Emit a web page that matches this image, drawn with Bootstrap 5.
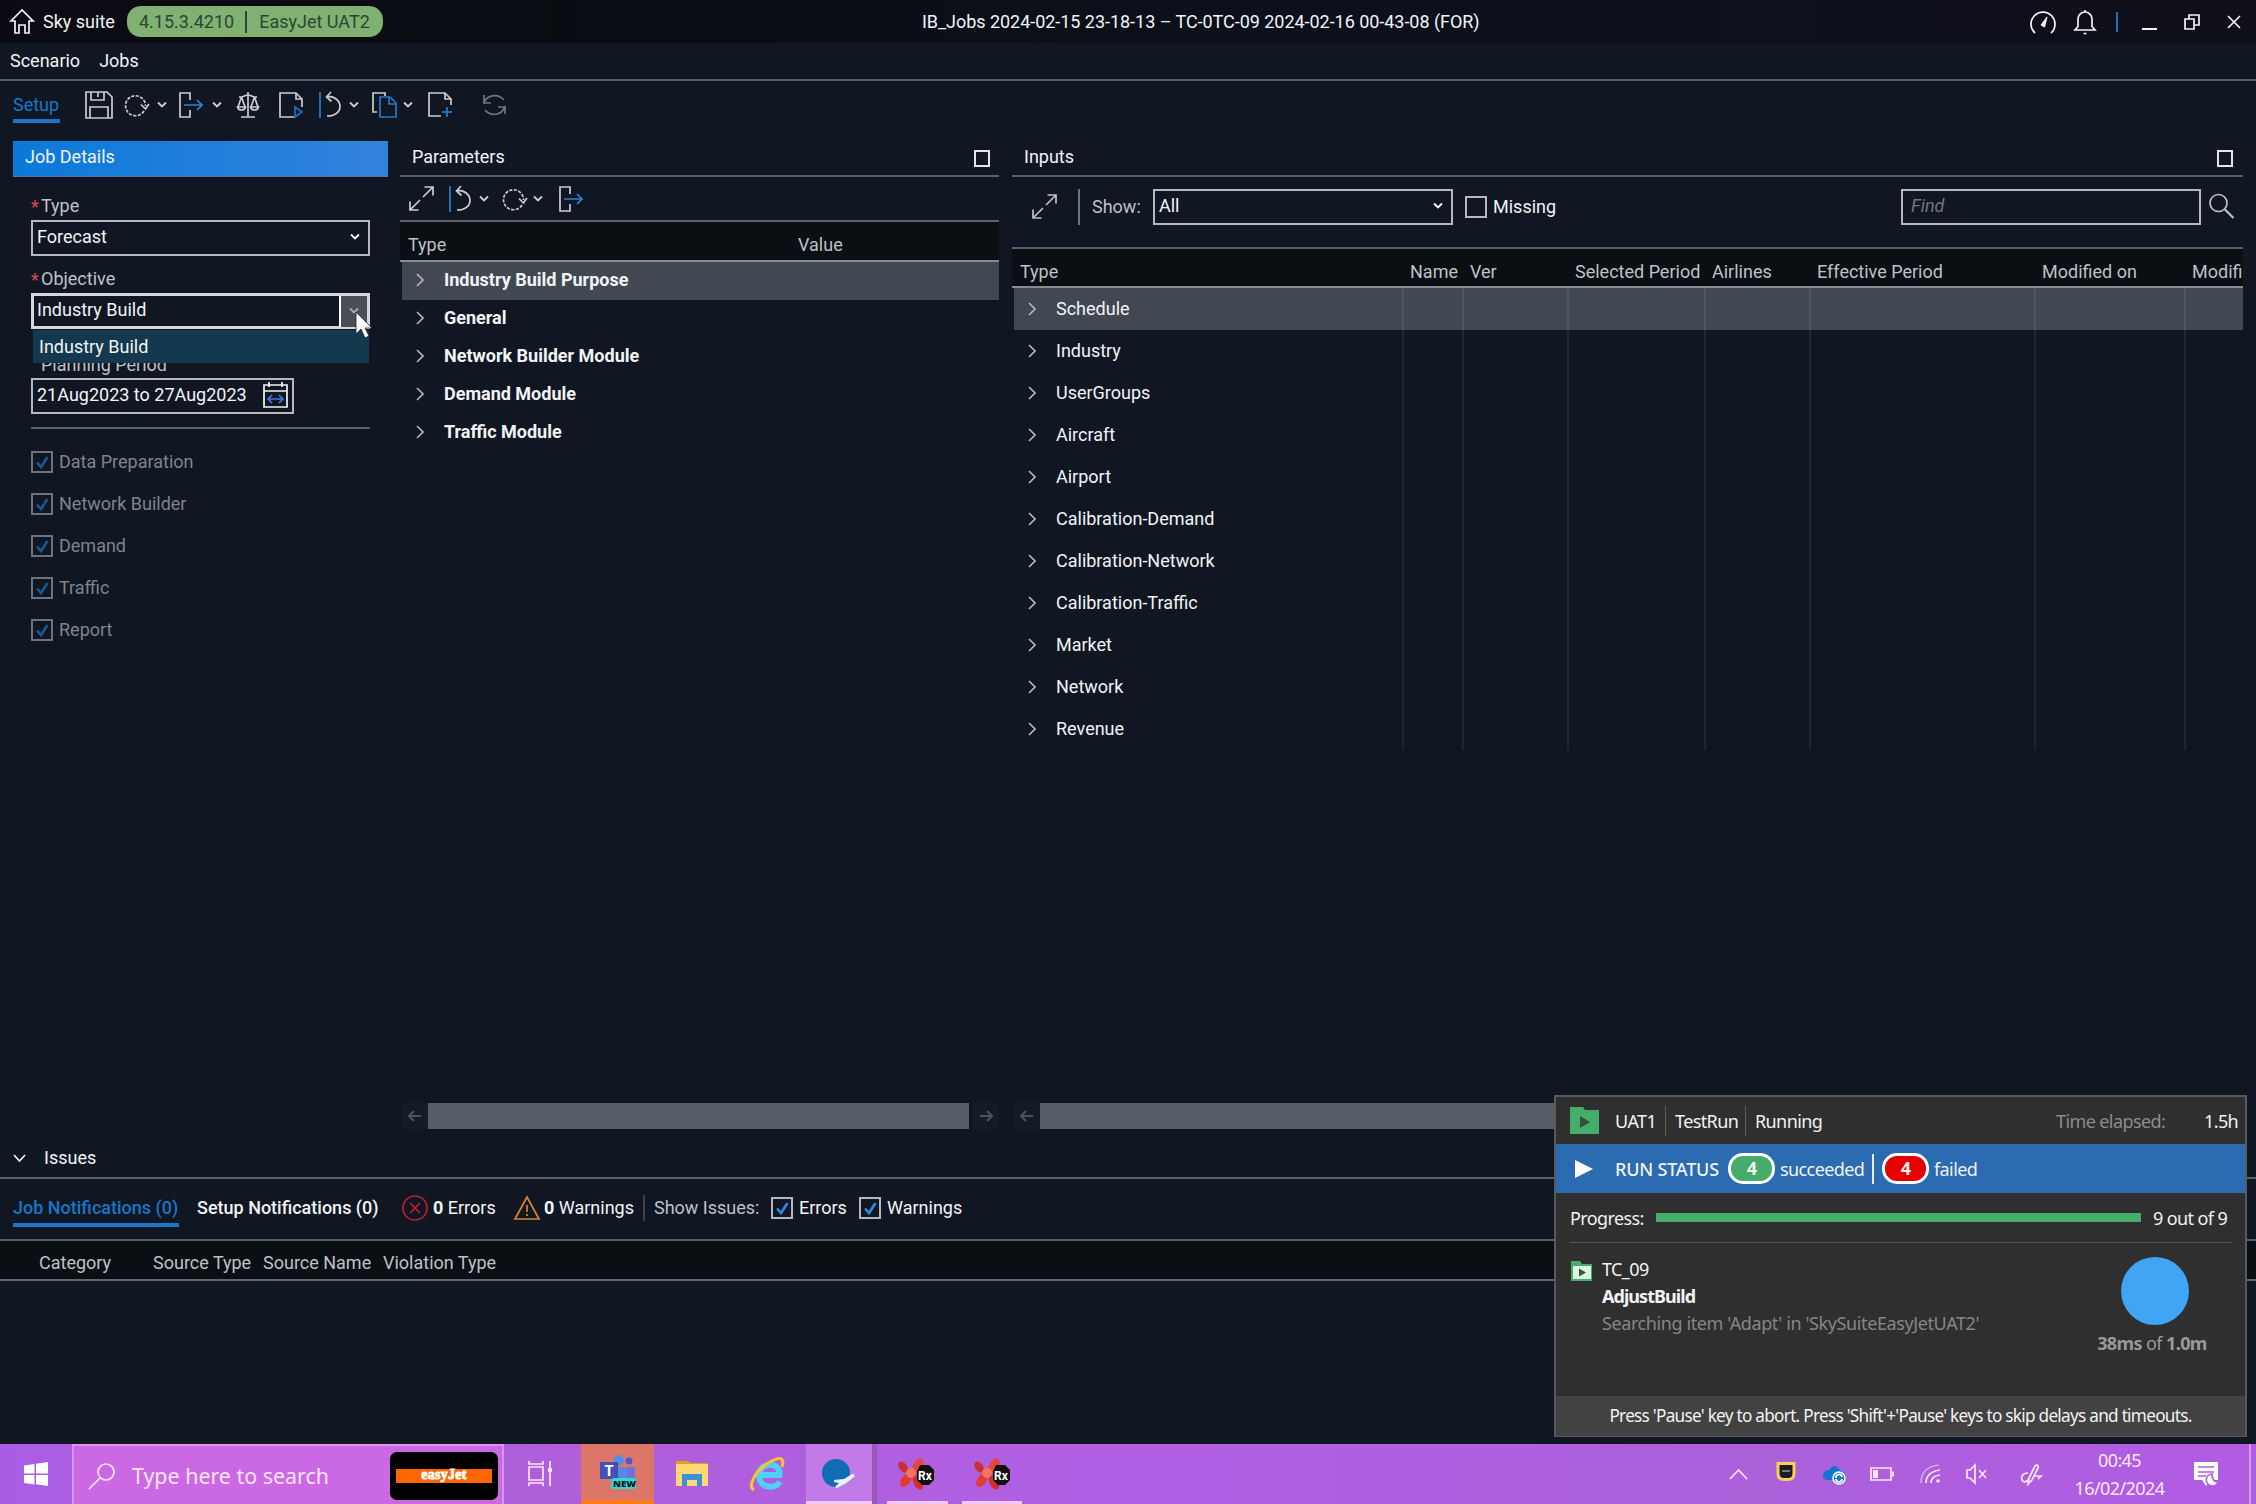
<!DOCTYPE html>
<html lang="en" data-bs-theme="dark">
<head>
<meta charset="utf-8">
<title>Sky suite</title>
<link href="https://cdn.jsdelivr.net/npm/bootstrap@5.3.0/dist/css/bootstrap.min.css" rel="stylesheet">
<style>
:root{--bg:#101722;--line:#596069;--txt:#f1f4f7;--soft:#bdc2c8;--dim:#7e848c;--blue:#1677c8}
body{width:2256px;height:1504px;overflow:hidden;background:var(--bg);color:var(--txt);font:18px/22px Roboto,sans-serif;white-space:nowrap}
svg{display:block;overflow:visible;fill:none;stroke:currentColor;stroke-width:1.7}
.slots{display:grid;align-items:center}
.soft{color:var(--soft)}
.titlebar{height:43px;background:linear-gradient(90deg,#0c0b13,#090d12 25%,#0c101b 55%,#0f0f1a);grid-template-columns:43px 84px 795px 1108px 44px 42px 26px 42px 44px 20px}
.version{width:256px;height:31px;border-radius:14px;background:#80b072;color:#2b4733;padding-left:12px}
.version i{width:2px;height:22px;background:#2b4733;margin:0 12px 0 11px}
.wtitle{letter-spacing:-.04px}
.menubar{height:38px;border-bottom:2px solid var(--line);padding:0 10px 1px;gap:19px}
.toolbar{height:60px;padding:0 0 13px 13px;color:#c9cdd2;grid-template-columns:72px 39px 33px 22px 33px 25px 42px 40px 30px 23px 31px 25px 55px 30px}
.tab-on{color:var(--blue);align-self:start;height:33px;border-bottom:4px solid var(--blue)}
.toolbar .tab-on{width:47px;margin-top:9px;padding-top:4px}
.work{height:999px;padding-left:13px}
.job{width:375px;margin-right:12px}
.job-head{height:36px;background:linear-gradient(90deg,#0b79d8,#3383dc);border-bottom:1px solid #5d7590;padding:5px 12px}
.job-form{padding:0 18px}
.lab{height:22px;padding-left:10px;position:relative;color:var(--soft)}
.req::before{content:"*";color:#e0475f;position:absolute;left:0;top:1px}
.lab1{margin-top:18px}.lab2{margin-top:12px}.lab3{margin-top:25px}
.box{height:36px;border:2px solid #b4b9bf;padding:0 4px;display:flex;align-items:center}
.box .cv{margin-left:auto;margin-right:4px}
.lab1+.box{margin-top:3px;width:339px;padding-bottom:3px}
.objective{margin-top:3px;width:339px;border:3px solid #d3d6da;padding-right:0;padding-left:3px;position:relative}
.objective>span:first-child{margin-top:-3px}
.objective .drop{width:28px;height:31px;margin-left:auto;border-left:2px solid #fff;background:#4a4f57;color:#a9adb3}
.objective .menu-pop{position:absolute;left:-1px;top:34px;width:336px;height:33px;background:#14384d;z-index:2;padding:6px 6px}
.cursor{position:absolute;left:321px;top:15px;z-index:3}
.period{width:263px;margin-top:2px;padding-bottom:2px}
.rule{height:2px;background:var(--line);margin:13px 0 22px 0}
.ck{height:22px;display:flex;align-items:center;gap:6px}
.ck b{width:22px;height:22px;border:2px solid #b4b9bf;flex:none;color:#2b8ae0}
.ck svg{stroke-width:2.6}
.job .ck{margin-bottom:20px;color:var(--dim)}
.job .ck b{border-color:#6d737b;color:#175893}
.params{width:599px;margin-right:13px}
.inputs{width:1231px}
.pane-head{height:36px;border-bottom:2px solid var(--line);padding:0 9px 2px 12px}
.inputs .pane-head{padding-right:10px}
.sq{width:16px;height:17px;border:2px solid #e3e6e9;margin-top:3px}
.ptools{height:45px;border-bottom:2px solid var(--line);padding-left:9px;color:#c9cdd2;grid-template-columns:40px 30px 23px 31px 26px 30px}
.thead-x{background:#0a0f13;border-bottom:2px solid #868c93;color:var(--soft)}
.params .thead-x{height:40px;grid-template-columns:390px 1fr;padding:7px 0 0 8px}
.params .tr-x{height:38px;font-weight:700;margin:0 0 0 2px;padding:0 0 2px 14px;grid-template-columns:28px 1fr}
.tr-x svg{color:#b3b8be;stroke-width:1.6}
.sel{background:#424851}
.scroll-x{margin-top:auto;height:26px;margin-bottom:11px;color:#4c535c;padding-left:2px}
.scroll-x .thumb{height:26px;background:#575d66}
.scroll-x .arr{width:26px;height:26px;background:#151c26;flex:none;display:grid;place-items:center}
.itools{height:72px;border-bottom:2px solid var(--line);padding:0 0 11px 20px;grid-template-columns:46px 14px 61px 312px 436px 308px 30px}
.itools .sep{width:2px;height:36px;background:#70767e}
.itools .box{width:300px;padding-bottom:1px}
.inputs .thead-x,.inputs .tr-x{grid-template-columns:390px 60px 105px 137px 105px 225px 150px 1fr}
.inputs .thead-x{height:39px;padding:8px 0 0 0}
.inputs .thead-x>*{padding-left:8px}
.inputs .tr-x{height:42px;margin-left:2px;align-items:stretch}
.inputs .tr-x>span{border-right:2px solid #1f2630;display:flex;align-items:center}
.inputs .tr-x>span:first-child{padding-left:14px;gap:20px}
.inputs .sel>span{border-color:#50565f}
.inputs .tr-x>span:last-child{border:0}
.issues{height:304px}
.issues-head{height:39px;border-bottom:2px solid var(--line);padding:0 0 1px 13px;gap:18px}
.issue-tools{height:62px;border-bottom:2px solid var(--line);grid-template-columns:184px 205px 31px 81px 30px 99px 11px 117px 88px 100px;padding:0 0 2px 13px}
.issue-tools .tab-on{width:166px;height:36px;margin-top:12px;padding-top:6px;font-weight:500}
.issue-tools .setup-tab{font-weight:500}
.issues .thead-x{height:40px;grid-template-columns:114px 110px 120px 1fr;padding:6px 0 0 39px;border-color:#5f666e}
/* agent overlay */
.agent{position:absolute;left:1554px;top:1095px;width:693px;height:342px;background:#2f2f2f;border:2px solid #555a5e;font:18px/24px "Noto Sans",sans-serif;letter-spacing:-.6px;color:#f2f2f2;z-index:5}
.a-top{height:47px;grid-template-columns:45px 50px 10px 70px 10px 301px 148px 1fr;padding-left:14px}
.a-top i{width:1px;height:30px;background:#5c5c5c}
.a-run{height:49px;background:#2b6bb1;grid-template-columns:40px 113px 52px 92px 10px 52px 1fr;padding-left:19px}
.a-run i{width:2px;height:30px;background:#e6eef7}
.run-word{font-weight:500;letter-spacing:-.2px}
.pill{width:47px;height:31px;border:3px solid #fff;border-radius:15px;text-align:center;font-weight:700;line-height:25px}
.a-prog{height:50px;margin:0 13px 0 14px;border-bottom:1px solid #555;grid-template-columns:86px 497px 1fr}
.a-prog .bar-x{width:485px;height:9px;background:#45ad69}
.a-body{height:153px;padding:14px 33px 0 15px}
.a-lines>div{height:27px}
.a-lines .adj{letter-spacing:-.95px}
.a-lines .srch{color:#868686;letter-spacing:-.4px}
.a-time{color:#999;width:120px}
.a-time>div{margin-top:6px}
.a-foot{height:40px;background:#424242;display:grid;place-items:center;font-size:17.2px;letter-spacing:-.73px}
/* Windows taskbar */
.taskbar{height:60px;background:linear-gradient(90deg,#a95de4,#ae5fd9 25%,#b05fe4 50%,#ac60da 78%,#b05ce4);font:18px/28px "Noto Sans",sans-serif}
.tk{height:60px;display:grid;place-items:center;flex:none}
.find-x{width:432px;background:#cb68e3;border:2px solid #d894ee;border-bottom:0;color:#fbe4ff;display:flex;align-items:center;padding-left:15px;padding-top:1px}
.find-x span{font-size:21.4px;margin-left:17px}
.ez{width:108px;height:48px;border-radius:7px;background:#000;display:grid;place-items:center;margin:0 4px 0 auto}
.ez b{width:96px;height:14px;background:#ff6600;color:#fff;font:900 14px/11px "Liberation Serif",serif;text-align:center;-webkit-text-stroke:.8px #fff;letter-spacing:.3px}
.on::after{content:"";position:absolute;bottom:0;height:3px;left:0;right:0;background:#f0c8fb}
.tray{margin-left:auto;height:60px;color:#fbe6ff;grid-template-columns:47px 46px 48px 50px 46px 55px 52px 121px 55px 7px}
.clock{line-height:28px;letter-spacing:-.6px;margin-left:-10px;width:113px}
</style>
<script src="https://cdn.jsdelivr.net/npm/bootstrap@5.3.0/dist/js/bootstrap.bundle.min.js"></script>
</head>
<body>
<svg width="0" height="0" class="position-absolute">
<symbol id="cv" viewBox="0 0 10 8"><path d="M1 1.500 5 5.500l4-4" stroke-width="1.900"/></symbol>
<symbol id="rt" viewBox="0 0 8 14"><path d="M1 1l6 6-6 6"/></symbol>
<symbol id="ok" viewBox="0 0 18 18"><path d="M4 9.500l4 4.500 6.500-10"/></symbol>
<symbol id="redo" viewBox="0 0 26 26"><path d="M20 19A10 10 0 1 1 21.500 14" stroke-dasharray="3.200 1.400"/><path d="M17 12.500l4.500 4.500 3.500-5"/></symbol>
<symbol id="undo" viewBox="0 0 24 28"><path d="M1 1v26" stroke="#1c70ba" stroke-width="2"/><path d="M12 1L7.500 6l5 4.500M8 5.500C16 5 21 10 21 15.500S16 25 8 25"/></symbol>
<symbol id="exp" viewBox="0 0 24 26"><path d="M11 8V1H1v24h10v-7"/><path d="M5 13h18M18 8l5 5-5 5" stroke="#2f80d0"/></symbol>
<symbol id="grow" viewBox="0 0 25 25"><path d="M14 11L24 1M15.500 1H24v8.500M11 14L1 24M1 15.500V24h8.500"/></symbol>
<symbol id="rx" viewBox="0 0 36 32"><g stroke="none"><ellipse cx="5" cy="9" rx="4" ry="6" transform="rotate(-35 5 9)" fill="#c9302f"/><ellipse cx="20" cy="8" rx="5" ry="8" transform="rotate(25 20 8)" fill="#e8453c"/><ellipse cx="8" cy="22" rx="4.500" ry="8" transform="rotate(35 8 22)" fill="#e33b34"/><ellipse cx="20" cy="24" rx="4.500" ry="8" transform="rotate(-25 20 24)" fill="#d42d2b"/><circle cx="13" cy="15" r="5" fill="#f4735e"/><path d="M22 7h9l6 6v8l-6 6h-7l-5-5v-9z" fill="#111"/></g><text x="20" y="22" font-family="Roboto" font-weight="700" font-size="12" fill="#fff" stroke="none">Rx</text></symbol>
</svg>

<div class="titlebar slots">
  <svg width="34" height="27" viewBox="-10 0 34 27"><path d="M1 13L12 2l11 11h-4v12h-4v-8H9v8H5V13z"/></svg>
  <span>Sky suite</span>
  <div class="version d-flex align-items-center"><span>4.15.3.4210</span><i></i><span>EasyJet UAT2</span></div>
  <span class="wtitle">IB_Jobs 2024-02-15 23-18-13 – TC-0TC-09 2024-02-16 00-43-08 (FOR)</span>
  <svg width="26" height="26"><path d="M5 24A12 12 0 1 1 21 24"/><path d="M11 16L17 8l-2.500 10z" fill="currentColor" stroke-width="1"/></svg>
  <svg width="22" height="26"><path d="M1 21h20l-3-3.500V10a7 7 0 0 0-14 0v7.500zM11 3V1M9.500 24.500h3"/></svg>
  <svg width="2" height="20"><path d="M1 0v20" stroke="#1c70ba" stroke-width="2"/></svg>
  <svg width="16" height="22"><path d="M0 18h15" stroke-width="2"/></svg>
  <svg width="16" height="16"><path d="M1 5h9v10H1zM5 5V1h10v10h-5"/></svg>
  <svg width="12" height="14"><path d="M0 1l12 12M12 1L0 13"/></svg>
</div>
<div class="menubar d-flex align-items-center"><span>Scenario</span><span>Jobs</span></div>

<div class="toolbar slots">
  <span class="tab-on">Setup</span>
  <svg width="28" height="28"><path d="M1 1h21l5 5v21H1zM6 1v8h13V1M13 1v5M5 27V16h18v11"/></svg>
  <svg width="26" height="26"><use href="#redo"/></svg><svg width="10" height="8"><use href="#cv"/></svg>
  <svg width="24" height="26"><use href="#exp"/></svg><svg width="10" height="8"><use href="#cv"/></svg>
  <svg width="22" height="26"><path d="M11 0v25M4 25h14M2 5c4 1 5-2 9-2s5 3 9 2M4.500 5L1 15M4.500 5L8 15M17.500 5L14 15M17.500 5L21 15M.5 15c1 4 7 4 8 0zM13.500 15c1 4 7 4 8 0z"/></svg>
  <svg width="24" height="26"><path d="M15 25H1V1h16l6 6v8M17 1v6h6"/><path d="M16 15l7 5-7 5z" stroke="#1c70ba"/></svg>
  <svg width="24" height="28"><use href="#undo"/></svg><svg width="10" height="8"><use href="#cv"/></svg>
  <svg width="25" height="26"><path d="M5 20H1V1h12v3"/><path d="M8 5h10l6 6v14H8zM17 5v7h7" stroke="#2079cc"/></svg><svg width="10" height="8"><use href="#cv"/></svg>
  <svg width="24" height="26"><path d="M13 24H1V1h16l6 6v6M17 1v6h6"/><path d="M19 15v10M14 20h10" stroke="#1c70ba" stroke-width="2"/></svg>
  <svg width="23" height="24" color="#6f757d"><path d="M1 10C3 3 14-1 21 7M22 13C20 21 9 25 2 17M1 2v8h7M22 21v-7h-7"/></svg>
</div>

<div class="work d-flex">
  <section class="job">
    <div class="job-head">Job Details</div>
    <div class="job-form">
      <div class="lab req lab1">Type</div>
      <div class="box">Forecast<svg class="cv" width="10" height="8"><use href="#cv"/></svg></div>
      <div class="lab req lab2">Objective</div>
      <div class="box objective"><span>Industry Build</span><span class="drop d-grid"><svg class="m-auto" width="10" height="8"><use href="#cv"/></svg></span>
        <div class="menu-pop">Industry Build</div>
        <svg class="cursor" width="18" height="28" viewBox="0 0 18 28"><path d="M1 1v22l5-5 4 9 4-2-4-8h7z" fill="#fff" stroke="#222" stroke-width=".8"/></svg>
      </div>
      <div class="lab lab3">Planning Period</div>
      <div class="box period">21Aug2023 to 27Aug2023<svg class="ms-auto" width="25" height="26"><path d="M1 3h23v22H1zM1 9h23M6 0v5M19 0v5"/><path d="M5 17h15M9 13l-4 4 4 4M16 13l4 4-4 4" stroke="#4676e0"/></svg></div>
      <div class="rule"></div>
      <div class="ck"><b><svg width="18" height="18"><use href="#ok"/></svg></b>Data Preparation</div>
      <div class="ck"><b><svg width="18" height="18"><use href="#ok"/></svg></b>Network Builder</div>
      <div class="ck"><b><svg width="18" height="18"><use href="#ok"/></svg></b>Demand</div>
      <div class="ck"><b><svg width="18" height="18"><use href="#ok"/></svg></b>Traffic</div>
      <div class="ck"><b><svg width="18" height="18"><use href="#ok"/></svg></b>Report</div>
    </div>
  </section>

  <section class="params d-flex flex-column">
    <div class="pane-head d-flex align-items-center justify-content-between"><span>Parameters</span><i class="sq"></i></div>
    <div class="ptools slots">
      <svg width="25" height="25"><use href="#grow"/></svg>
      <svg width="24" height="28"><use href="#undo"/></svg><svg width="10" height="8"><use href="#cv"/></svg>
      <svg width="26" height="26"><use href="#redo"/></svg><svg width="10" height="8"><use href="#cv"/></svg>
      <svg width="24" height="26"><use href="#exp"/></svg>
    </div>
    <div class="thead-x slots"><span>Type</span><span>Value</span></div>
    <div class="tr-x slots sel"><svg width="8" height="14"><use href="#rt"/></svg><span>Industry Build Purpose</span></div>
    <div class="tr-x slots"><svg width="8" height="14"><use href="#rt"/></svg><span>General</span></div>
    <div class="tr-x slots"><svg width="8" height="14"><use href="#rt"/></svg><span>Network Builder Module</span></div>
    <div class="tr-x slots"><svg width="8" height="14"><use href="#rt"/></svg><span>Demand Module</span></div>
    <div class="tr-x slots"><svg width="8" height="14"><use href="#rt"/></svg><span>Traffic Module</span></div>
    <div class="scroll-x d-flex"><span class="arr"><svg width="14" height="12"><path d="M13 6H1M6 1L1 6l5 5" stroke-width="2"/></svg></span><span class="thumb flex-fill me-1"></span><span class="arr"><svg width="14" height="12"><path d="M1 6h12M8 1l5 5-5 5" stroke-width="2"/></svg></span></div>
  </section>

  <section class="inputs d-flex flex-column">
    <div class="pane-head d-flex align-items-center justify-content-between"><span>Inputs</span><i class="sq"></i></div>
    <div class="itools slots">
      <svg width="25" height="25" class="soft"><use href="#grow"/></svg><i class="sep"></i><span class="soft">Show:</span>
      <div class="box">All<svg class="cv" width="10" height="8"><use href="#cv"/></svg></div>
      <span class="ck"><b></b>Missing</span>
      <div class="box ps-2"><i style="color:#70767e">Find</i></div>
      <svg width="25" height="25" class="soft"><circle cx="9.500" cy="9" r="8.500"/><path d="M15.500 15l9 9" stroke-width="2.200"/></svg>
    </div>
    <div class="thead-x slots"><span>Type</span><span>Name</span><span>Ver</span><span>Selected Period</span><span>Airlines</span><span>Effective Period</span><span>Modified on</span><span>Modifi</span></div>
    <div id="inputRows"></div>
    <div class="scroll-x d-flex"><span class="arr"><svg width="14" height="12"><path d="M13 6H1M6 1L1 6l5 5" stroke-width="2"/></svg></span><span class="thumb flex-fill"></span></div>
  </section>
</div>

<section class="issues">
  <div class="issues-head d-flex align-items-center"><svg width="13" height="8"><path d="M1 1l5.500 6L12 1"/></svg><span>Issues</span></div>
  <div class="issue-tools slots">
    <span class="tab-on">Job Notifications (0)</span><span class="setup-tab">Setup Notifications (0)</span>
    <svg width="26" height="26" color="#b8202e"><circle cx="13" cy="13" r="12"/><path d="M8 8l10 10M18 8L8 18"/></svg><span><strong>0</strong> Errors</span>
    <svg width="26" height="26" color="#d98330"><path d="M13 2l12 22H1zM13 10v7M13 19v2"/></svg><span><strong>0</strong> Warnings</span>
    <svg width="2" height="26"><path d="M1 0v26" stroke="#3d434c" stroke-width="2"/></svg><span class="soft">Show Issues:</span>
    <span class="ck"><b><svg width="18" height="18"><use href="#ok"/></svg></b>Errors</span><span class="ck"><b><svg width="18" height="18"><use href="#ok"/></svg></b>Warnings</span>
  </div>
  <div class="thead-x slots"><span>Category</span><span>Source Type</span><span>Source Name</span><span>Violation Type</span></div>
</section>

<footer class="taskbar d-flex">
  <div class="tk" style="width:72px"><svg width="24" height="24"><path stroke="none" fill="#fff" d="M0 3.500L10.500 2v9.500H0zM12 1.800L24 0v11.500H12zM0 13h10.500v9.500L0 21zM12 13h12v11l-12-1.800z"/></svg></div>
  <div class="find-x"><svg width="26" height="26"><circle cx="17" cy="9" r="8"/><path d="M11 15L0 26"/></svg><span>Type here to search</span><div class="ez"><b>easyJet</b></div></div>
  <div class="tk pe-1" style="width:77px;color:#fbe6ff"><svg width="25" height="26"><path d="M1 6h14v13H1zM1 0v3h14V0M1 25v-3h14v3M22 0v25"/><circle cx="22" cy="9" r="1.500" fill="currentColor"/></svg></div>
  <div class="tk" style="width:73px;background:#dc7668;border-bottom:4px solid #ff7a1a">
    <svg width="36" height="34"><g stroke="none"><circle cx="19" cy="5" r="5" fill="#4d8fe8"/><circle cx="29" cy="6" r="3.500" fill="#5059c9"/><path d="M17 12h10v14H17z" fill="#5d86e0"/><path d="M27 12h8v9q0 6-8 6z" fill="#6a75d8"/><path d="M0 7h18v17H0z" fill="#4350b8"/><rect x="11" y="23" width="25" height="11" rx="3" fill="#2fd9d4"/></g><text x="4.500" y="21" font-family="Lato" font-weight="900" font-size="15" fill="#fff" stroke="none">T</text><text x="13" y="32" font-family="Open Sans" font-weight="800" font-size="9.500" fill="#111" stroke="none">NEW</text></svg></div>
  <div class="tk" style="width:76px"><svg width="32" height="28"><g stroke="none"><path d="M0 1h12l3 2h16v6H0z" fill="#e0a21a"/><path d="M0 4h32v22H0z" fill="#fdd873"/><path d="M6 14h20v12h-5v-6H11v6H6z" fill="#3f8fd8"/></g></svg></div>
  <div class="tk" style="width:76px"><svg width="36" height="34"><path d="M30 25c-6 8-21 6-21-7S31 4 29.500 18H12" stroke="#4fd0f5" stroke-width="6"/><path d="M4 33C-3 29 6 13 18 6s17-6 14 4" stroke="#f7c52d" stroke-width="3"/></svg></div>
  <div class="tk position-relative on" style="width:66px;background:#c27ae6;box-shadow:5px 0 0 #9a58bb"><svg width="34" height="30"><circle cx="14" cy="14" r="14" fill="#0f6cb5" stroke="none"/><path d="M12 21l10-1 8-5q4 0 2 3l-9 7-8 4-2-1 4-4-5-1z" fill="#e8f4fb" stroke="none"/></svg></div>
  <div class="tk position-relative on pe-1" style="width:61px;margin-left:15px"><svg width="36" height="32"><use href="#rx"/></svg></div>
  <div class="tk position-relative on" style="width:60px;margin-left:14px"><svg width="36" height="32"><use href="#rx"/></svg></div>

  <div class="tray slots">
    <svg width="19" height="12"><path d="M1 11l8.500-9L18 11"/></svg>
    <svg width="20" height="24" viewBox="0 0 20 24"><path d="M2 1.500h16v10q0 6-6 6H8q-6 0-6-6z" fill="#1a1c22" stroke="#f6d058" stroke-width="3"/><path d="M6 9h8" stroke="#888"/></svg>
    <svg width="25" height="21"><path d="M4 16q-5-3-2-8 3-2 5-2 5-8 11 0 7 2 5 10z" fill="#1074d0" stroke="none"/><circle cx="17" cy="14" r="6" fill="#1b78c8" stroke="#fff" stroke-width="1.500"/><path d="M14 14a3 3 0 0 1 6-1M20 15a3 3 0 0 1-6 0" stroke="#fff"/></svg>
    <svg width="24" height="14"><path d="M1 1h20v12H1zM23 4.500v5"/><path d="M3 3h5v8H3z" fill="currentColor" stroke="none"/></svg>
    <svg width="21" height="20"><path d="M1 19Q1 3 19 1" opacity=".5"/><path d="M6 19Q6 8 20 6M11 19q0-7 9-8"/><circle cx="18" cy="17" r="1.800" fill="currentColor" stroke="none"/></svg>
    <svg width="22" height="20"><path d="M1 6h3l5-5v18l-5-5H1zM13 6l7 8M20 6l-7 8"/></svg>
    <svg width="22" height="21"><path d="M7 9c-6 0-7 4-6 7s6 2 7-2l6-12c2-2 4 0 3 2l-6 12-4 4 1-6 5-10M13 12h7l-3 3"/></svg>
    <div class="clock text-center"><div>00:45</div><div>16/02/2024</div></div>
    <svg width="25" height="26"><path d="M0 1h24v18h-8l-4 6-4-6H0z" fill="#fff" stroke="none"/><path d="M4 6h16M4 11h16M4 15h8" stroke="#b05fdd"/><path d="M18 13a6 6 0 1 0 6 8q-6 0-6-8z" fill="#fff" stroke="#b05fdd"/></svg>
    <svg width="2" height="60"><path d="M1 0v60" stroke="#d49bee" stroke-width="2"/></svg>
  </div>
</footer>

<aside class="agent">
  <div class="a-top slots">
    <svg width="30" height="28"><path d="M0 0h13l2 3h14v24H0z" fill="#45ad69" stroke="none"/><path d="M10 9l10 6-10 6z" fill="#31513c" stroke="none"/></svg>
    <span>UAT1</span><i></i><span>TestRun</span><i></i><span>Running</span><span style="color:#8b8b8b">Time elapsed:</span><span>1.5h</span>
  </div>
  <div class="a-run slots">
    <svg width="18" height="18"><path d="M0 0l18 9-18 9z" fill="#fff" stroke="none"/></svg>
    <span class="run-word">RUN STATUS</span><span class="pill" style="background:#45ad69">4</span><span>succeeded</span><i></i><span class="pill" style="background:#e60000">4</span><span>failed</span>
  </div>
  <div class="a-prog slots"><span>Progress:</span><div class="bar-x"></div><span>9 out of 9</span></div>
  <div class="a-body d-flex justify-content-between">
    <div class="d-flex">
      <svg width="31" height="22" class="mt-1"><path d="M0 0h9l2 3h10v17H0z" fill="#45ad69" stroke="none"/><path d="M2 5h18v13H2z" fill="#dff5e6" stroke="none"/><path d="M8 7.500l7 4-7 4z" fill="#2f5a3c" stroke="none"/></svg>
      <div class="a-lines"><div>TC_09</div><div class="fw-bold adj">AdjustBuild</div><div class="srch">Searching item 'Adapt' in 'SkySuiteEasyJetUAT2'</div></div>
    </div>
    <div class="text-center a-time"><svg width="68" height="68" class="mx-auto"><circle cx="37" cy="34" r="34" fill="#41a5f5" stroke="none"/></svg><div><b>38ms</b> of <b>1.0m</b></div></div>
  </div>
  <div class="a-foot"><span>Press 'Pause' key to abort. Press 'Shift'+'Pause' keys to skip delays and timeouts.</span></div>
</aside>
<script>
const names=["Schedule","Industry","UserGroups","Aircraft","Airport","Calibration-Demand","Calibration-Network","Calibration-Traffic","Market","Network","Revenue"];
document.getElementById("inputRows").innerHTML=names.map((n,i)=>
 `<div class="tr-x slots ${i?'':'sel'}"><span><svg width="8" height="14"><use href="#rt"/></svg>${n}</span>${"<span></span>".repeat(7)}</div>`).join("");
</script>
</body>
</html>
